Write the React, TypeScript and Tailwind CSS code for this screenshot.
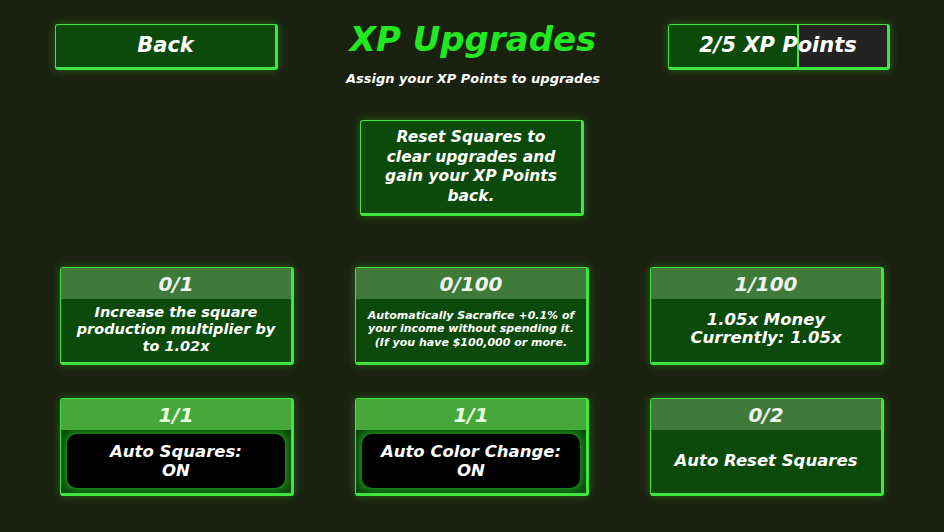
import React from "react";

type Card = {
  count: string;
  text: string;
  size: string;
  toggle?: boolean;
};

const topRow: Card[] = [
  {
    count: "0/1",
    text: "Increase the square production multiplier by to 1.02x",
    size: "text-[14.5px] leading-[17px] px-[10px]",
  },
  {
    count: "0/100",
    text: "Automatically Sacrafice +0.1% of your income without spending it. (If you have $100,000 or more.",
    size: "text-[11px] leading-[13.5px] px-[8px]",
  },
  {
    count: "1/100",
    text: "1.05x Money\nCurrently: 1.05x",
    size: "text-[16.5px] leading-[18px] px-2",
  },
];

const bottomRow: Card[] = [
  { count: "1/1", text: "Auto Squares:\nON", size: "text-[16.5px] leading-[19px]", toggle: true },
  { count: "1/1", text: "Auto Color Change:\nON", size: "text-[16.5px] leading-[19px]", toggle: true },
  { count: "0/2", text: "Auto Reset Squares", size: "text-[16.5px] leading-[19px] px-2" },
];

const box =
  "border border-[#3ee63e] border-r-[3px] border-b-[3px] rounded-[3px] shadow-[0_0_10px_rgba(70,255,70,0.3)]";

const UpgradeCard = ({ card }: { card: Card }) => {
  return (
    <div className={`${box} bg-[#0b4a0b] flex flex-col h-[98px] overflow-hidden`}>
      <div
        className={`h-[31px] flex items-center justify-center text-[20px] ${
          card.toggle ? "bg-[#46a83a] text-[#e8ffe0]" : "bg-[#3f7a3a] text-[#eef5ee]"
        }`}
      >
        {card.count}
      </div>
      {card.toggle ? (
        <div className="flex-1 px-[6px] pt-[4px] pb-[5px] flex">
          <div
            className={`flex-1 rounded-[10px] bg-black shadow-[0_0_6px_3px_rgba(40,200,40,0.5)] flex items-center justify-center text-center whitespace-pre-line ${card.size}`}
          >
            {card.text}
          </div>
        </div>
      ) : (
        <div
          className={`flex-1 flex items-center justify-center text-center whitespace-pre-line pb-[3px] ${card.size}`}
        >
          {card.text}
        </div>
      )}
    </div>
  );
};

export default function App() {
  return (
    <div
      className="w-[944px] h-[532px] bg-[#1b2110] text-white font-bold italic overflow-hidden"
      style={{ fontFamily: '"DejaVu Sans", "Noto Sans", sans-serif' }}
    >
      <div className="flex items-start justify-between pl-[55px] pr-[54px] pt-[20px]">
        <button className={`${box} mt-[4px] bg-[#0b4a0b] w-[223px] h-[46px] text-[21px] text-white italic font-bold`}>
          Back
        </button>
        <div className="flex flex-col items-center">
          <h1 className="text-[34px] leading-[38px] text-[#22e822] font-bold">XP Upgrades</h1>
          <p className="text-[13px] leading-[16px] mt-[13px]">Assign your XP Points to upgrades</p>
        </div>
        <div className={`${box} mt-[4px] relative w-[222px] h-[46px] bg-[#232323] overflow-hidden`}>
          <div className="absolute left-0 top-0 bottom-0 w-[130px] bg-[#0b4a0b] border-r-2 border-[#3ee63e]" />
          <div className="relative h-full flex items-center justify-center text-[21px]">2/5 XP Points</div>
        </div>
      </div>

      <div className="flex justify-center mt-[33px]">
        <div
          className={`${box} bg-[#0b4a0b] w-[224px] h-[96px] flex items-center justify-center text-center text-[15.5px] leading-[19.5px] px-[12px]`}
        >
          Reset Squares to clear upgrades and gain your XP Points back.
        </div>
      </div>

      <div className="grid grid-cols-3 gap-x-[61px] gap-y-[33px] px-[60px] mt-[51px]">
        {topRow.map((c, i) => (
          <UpgradeCard key={"t" + i} card={c} />
        ))}
        {bottomRow.map((c, i) => (
          <UpgradeCard key={"b" + i} card={c} />
        ))}
      </div>
    </div>
  );
}
